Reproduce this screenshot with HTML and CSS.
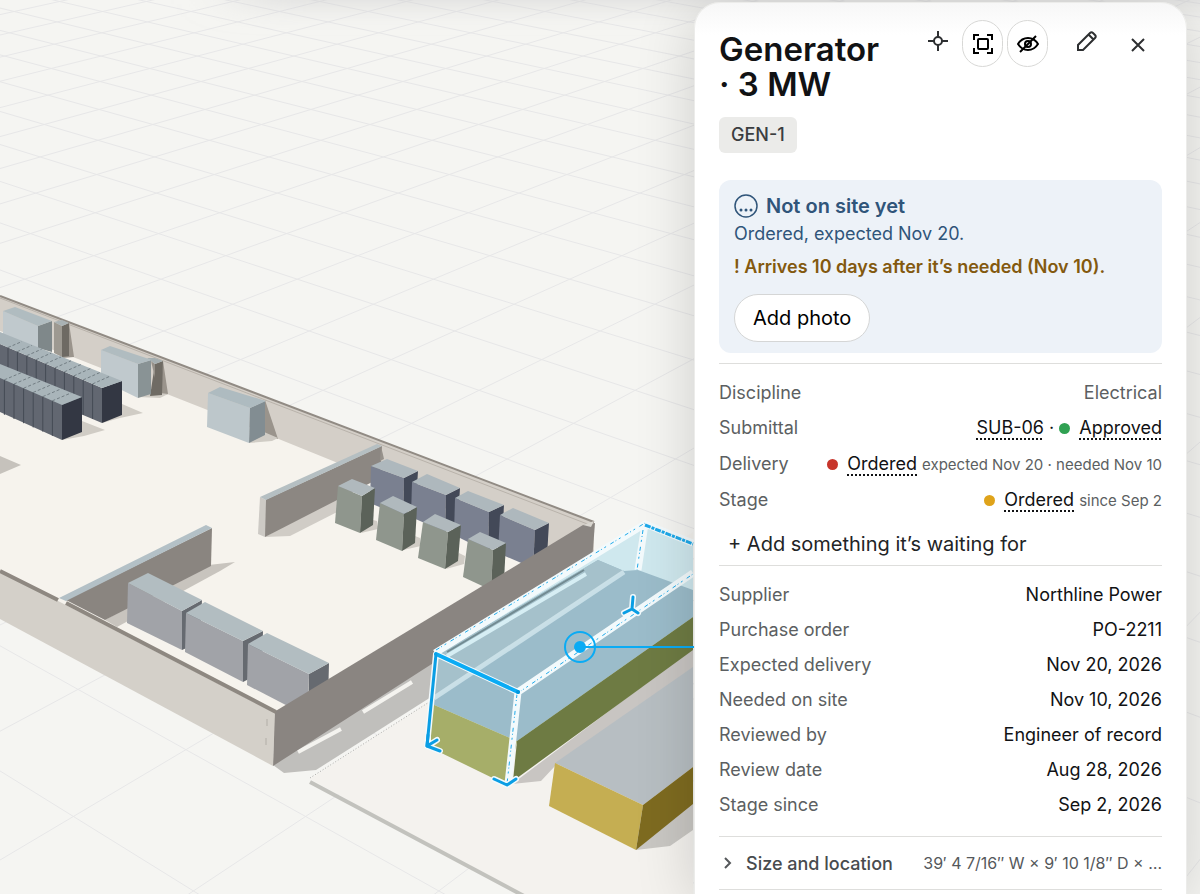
FILE: index.html
```html
<!DOCTYPE html>
<html lang="en">
<head>
<meta charset="utf-8">
<meta name="viewport" content="width=device-width, initial-scale=1">
<title>Generator · 3 MW</title>
<link rel="stylesheet" href="styles.css">
</head>
<body>
<div class="app">
  <svg class="scene" viewBox="0 0 1200 894" preserveAspectRatio="xMinYMin slice" aria-hidden="true">
    <defs>
      <filter id="soft" x="-20%" y="-200%" width="140%" height="500%"><feGaussianBlur stdDeviation="30 14"/></filter>
    </defs>
    <rect width="1200" height="894" fill="#f5f5f2"/>
    <g id="grid" class="grid"></g>
    <rect x="240" y="-30" width="1060" height="34" fill="#c9c9cc" fill-opacity=".6" filter="url(#soft)"/>

    <!-- building floor and back wall -->
    <path fill="#f6f3ed" d="M0 300 595 524 590 560 275 740 0 600z"/>
    <path fill="#d4cfc8" d="M0 296 594 522 594 560 540 548 333 461 205 409 73 357 0 331z"/>
    <path class="rim" d="M0 296 594 522"/>
    <path class="rim-light" d="M0 298 590 525"/>

    <!-- wall units -->
    <path fill="#9a948c" d="M69 323 74 357 62 358zM163 361 168 394 160 396zM265 400 278 439 263 435z"/>
    <path fill="#d0ccc5" d="M249 443 272 441 278 438 264 432zM138 397 160 398 168 394 152 392z"/>
    <g><path fill="#c0c9cd" d="M3 311 38 326V350L3 334z"/><path fill="#7f888a" d="M38 326 52 321V352L38 348z"/><path fill="#b0bcc0" d="M3 311 15 307 52 321 38 326z"/></g>
    <g><path fill="#9d9991" d="M54 322 62 326V357L54 353z"/><path fill="#6e6a63" d="M62 326 69 323V356L62 357z"/><path fill="#a9b2b4" d="M54 322 62 320 69 323 62 326z"/></g>
    <g><path fill="#6f6b64" d="M155 364 163 361 162 395 150 396z"/><path fill="#96918a" d="M151 361 155 364 155 378z"/><path fill="#a4aeb0" d="M147 358 155 358 163 361 155 364z"/><path fill="#c0c9cd" d="M101 350 138 364V398L101 380z"/><path fill="#899395" d="M138 364 151 360 151 394 138 398z"/><path fill="#b0bcc0" d="M101 350 110 346 152 360 138 364z"/></g>
    <g><path fill="#bdc7cb" d="M208 393 250 408 249 443 207 427z"/><path fill="#828d92" d="M250 408 265 401V435L249 443z"/><path fill="#aebbc0" d="M208 393 220 387 266 401 250 408z"/></g>

    <!-- server racks -->
    <path fill="#d0ccc5" d="M102 423 122 404 143 413 120 418zM62 440 82 421 105 430 84 436z"/>
    <path fill="#626771" d="M0 344 102 388V423L0 380z"/><path fill="#333743" d="M102 388 122 381V415L102 423z"/><path fill="#a9b5ba" d="M0 332 122 381 102 388 0 344z"/>
    <g id="seams-back" class="seams"></g>
    <path fill="#626771" d="M0 378 62 405V440L0 412z"/><path fill="#333743" d="M62 405 82 397V432L62 440z"/><path fill="#a9b5ba" d="M0 364 82 397 62 405 0 378z"/>
    <g id="seams-front" class="seams"></g>
    <path fill="#c6c2bc" d="M0 456 21 465 0 474z"/>

    <!-- back partition -->
    <path fill="#d0ccc6" d="M265 537 290 536 345 508V490z"/>
    <path fill="#8c8782" d="M265 500 382 446 380 478 265 537z"/>
    <path fill="#cdcac5" d="M260 497 266 500 265 537 258 534z"/>
    <path fill="#b5bfc2" d="M260 497 377 444 382 446 266 500z"/>
    <path fill="#97928b" d="M381 446 384 459 380 461z"/>

    <!-- electrical cabinets -->
    <g class="cab-blue">
      <path class="f" d="M371 466 404 478 403 517 370 503z"/><path class="s" d="M404 478 418 471 416 503 403 517z"/><path class="t" d="M371 466 387 459 418 471 404 478z"/>
      <path class="f" d="M412 482 446 495 445 532 411 517z"/><path class="s" d="M446 495 460 488 458 522 445 532z"/><path class="t" d="M412 482 427 474 460 488 446 495z"/>
      <path class="f" d="M455 498 489 512 488 552 454 535z"/><path class="s" d="M489 512 504 505 502 540 488 550z"/><path class="t" d="M455 498 468 491 504 505 489 512z"/>
      <path class="f" d="M500 515 535 530 533 568 498 553z"/><path class="s" d="M535 530 549 523 547 556 533 568z"/><path class="t" d="M500 515 513 508 549 523 535 530z"/>
    </g>
    <path fill="#d0ccc5" d="M361 533 378 529 377 521 373 520zM403 550 421 546 420 538 415 536zM446 569 464 564 465 556 459 553z"/>
    <g class="cab-green">
      <path class="f" d="M338 486 362 496 360 533 335 523z"/><path class="s" d="M362 496 375 488 373 525 360 533z"/><path class="t" d="M338 486 352 479 375 488 362 496z"/>
      <path class="f" d="M380 503 404 514 402 551 376 540z"/><path class="s" d="M404 514 417 507 415 543 402 551z"/><path class="t" d="M380 503 393 496 417 507 404 514z"/>
      <path class="f" d="M423 522 448 532 445 569 418 558z"/><path class="s" d="M448 532 461 525 458 561 445 569z"/><path class="t" d="M423 522 435 514 461 525 448 532z"/>
      <path class="f" d="M468 539 493 550 491 590 463 577z"/><path class="s" d="M493 550 506 543 504 580 491 590z"/><path class="t" d="M468 539 480 532 506 543 493 550z"/>
    </g>

    <!-- front partition and switchgear -->
    <path fill="#c8c4be" d="M105 620 200 566 235 562 220 571 117 627z"/>
    <path fill="#8a8580" d="M66 600 212 528 211 566 105 620z"/>
    <path fill="#b3c0c6" d="M59 598 206 525 212 528 66 601z"/>
    <g class="gear">
      <path class="f" d="M128 583 182 611V650L127 623z"/><path class="s" d="M182 611 202 600 200 642 182 650z"/><path class="t" d="M128 583 148 573 202 600 182 611z"/>
      <path class="f" d="M186 613 243 641V682L185 652z"/><path class="s" d="M243 641 263 631 262 672 243 682z"/><path class="t" d="M186 613 205 602 263 631 243 641z"/>
      <path class="f" d="M248 644 309 674 307 716 247 685z"/><path class="s" d="M309 674 329 663 328 700 308 715z"/><path class="t" d="M248 644 267 633 329 663 309 674z"/>
    </g>

    <!-- outer walls, ground shadow and pad -->
    <path fill="#c0bfbc" d="M273 765 284 773 316 770 450 685 600 580 590 550z"/>
    <path class="slit" d="M298 752 341 729M363 712 412 682"/>
    <path fill="#f4f2ee" d="M310 779 693 532V894H520z"/>
    <path class="pad-dash" d="M310 778 434 699"/>
    <path class="pad-edge" d="M310 782 524 896"/>
    <path fill="#8a8581" d="M274 712 583 525 595 523 592 561 273 766z"/>
    <path fill="#d4d0c9" d="M0 571 275 713 273 766 0 619z"/>
    <path class="front-rim" d="M0 571 58 600M66 603 276 712"/>
    <path fill="#d9d6d0" d="M583 525 594 521 591 527z"/>
    <path class="tick" d="M267 719V726M266 738V745"/>

    <!-- second generator -->
    <path fill="#c9c7c3" d="M636 850 670 846 693 830V800z"/>
    <path fill="#c8c5c2" d="M512 784 541 781 555 766 693 670V648z"/>
    <path fill="#b7bec2" d="M555 763 693 667V767L643 805z"/>
    <path fill="#c5ae52" d="M555 763 643 805 636 850 549 806z"/>
    <path fill="#7e6b20" d="M643 805 693 767V804L636 850z"/>

    <!-- selected generator -->
    <path fill="#cfe8ee" d="M435 653 645 524 693 543V617L517 741 432 704z"/>
    <path fill="#9bbcca" d="M437 655 598 560 624 571 638 570 693 590V617L517 741 432 704z"/>
    <path fill="#a5c1cb" d="M437 655 598 560 624 571 434 699z"/>
    <path fill="#a6ae69" d="M432 704 517 741 507 785 427 746z"/>
    <path fill="#6e7b43" d="M517 741 693 617V650L513 781z"/>
    <path class="streak-wide" d="M434 698 624 572"/>
    <path class="streak" d="M447 656 586 574"/>
    <path class="streak-dark" d="M447 652 584 570"/>
    <path class="halo" d="M435 653 645 524 693 543M518 692 693 573M645 524 638 570M518 692 508 784"/>
    <path class="spark" d="M436 650 645 523M518 693 693 574M643 530 637 570M517 694 507 784"/>
    <path class="spark strong" d="M645 525 693 544"/>
    <path class="outline-halo" d="M518 692 436 654 427 746 440 751M428 735V746L437 740M494 779 507 785 516 779M633 597 632 609 624 613M632 609 638 613"/>
    <path class="outline" d="M518 692 436 654"/>
    <path class="outline dark" d="M436 654 427 746"/>
    <path class="outline dark" d="M440 751 427 746 428 735M427 746 437 740M494 779 507 785 516 779M633 597 632 609 624 613M632 609 638 613"/>
    <circle cx="518" cy="692" r="2" fill="#0096dc"/>

    <!-- callout marker -->
    <g class="marker"><circle cx="580" cy="647" r="15"/><path d="M580 647H700"/><circle class="dot" cx="580" cy="647" r="5"/></g>
  </svg>

  <aside class="panel" aria-label="Item details">
    <header class="header">
      <h1 class="title">Generator · 3 MW</h1>
      <div class="actions">
        <button class="icon-btn locate" type="button" aria-label="Center in view"><svg width="22" height="22" viewBox="0 0 22 22"><circle cx="11" cy="11" r="4"/><path d="M11 1V7M11 15V21M1 11H7M15 11H21"/></svg></button>
        <button class="icon-btn ring" type="button" aria-label="Isolate"><svg width="22" height="22" viewBox="0 0 22 22"><path d="M2 7V2H7M15 2H20V7M20 15V20H15M7 20H2V15"/><rect x="6" y="6" width="10" height="10" rx="1"/></svg></button>
        <button class="icon-btn ring" type="button" aria-label="Hide"><svg width="22" height="22" viewBox="0 0 22 22"><path d="M1 11C6 3 16 3 21 11C16 19 6 19 1 11Z"/><circle cx="11" cy="11" r="3"/><path d="M3 19 19 3"/></svg></button>
        <button class="icon-btn edit" type="button" aria-label="Edit"><svg width="22" height="22" viewBox="0 0 22 22"><path d="M2 20V15L14 3Q15.500 1.500 17 3L19 5Q20.500 6.500 19 8L7 20ZM12.500 4.500 17.500 9.500"/></svg></button>
        <button class="icon-btn close" type="button" aria-label="Close"><svg width="14" height="14" viewBox="0 0 14 14"><path d="M1 1 13 13M13 1 1 13"/></svg></button>
      </div>
    </header>
    <span class="tag">GEN-1</span>

    <section class="status">
      <h2 class="status-title"><svg width="24" height="24" viewBox="0 0 24 24" aria-hidden="true"><circle cx="12" cy="12" r="11"/><path d="M7 16H7.010M12 16H12.010M17 16H17.010"/></svg>Not on site yet</h2>
      <p class="status-text">Ordered, expected Nov 20.</p>
      <p class="status-warning">! Arrives 10 days after it’s needed (Nov 10).</p>
      <button class="photo-btn" type="button">Add photo</button>
    </section>

    <section class="group">
      <dl class="rows">
        <div class="row"><dt>Discipline</dt><dd class="muted">Electrical</dd></div>
        <div class="row linked"><dt>Submittal</dt><dd><a href="#submittal">SUB-06</a> · <i class="dot green"></i><a href="#review">Approved</a></dd></div>
        <div class="row linked"><dt>Delivery</dt><dd><i class="dot red"></i><a href="#delivery">Ordered</a> <small>expected Nov 20 · needed Nov 10</small></dd></div>
        <div class="row linked"><dt>Stage</dt><dd><i class="dot amber"></i><a href="#stage">Ordered</a> <small>since Sep 2</small></dd></div>
      </dl>
      <button class="add-btn" type="button">+ Add something it’s waiting for</button>
    </section>

    <section class="group facts">
      <dl class="rows">
        <div class="row"><dt>Supplier</dt><dd>Northline Power</dd></div>
        <div class="row"><dt>Purchase order</dt><dd>PO-2211</dd></div>
        <div class="row"><dt>Expected delivery</dt><dd>Nov 20, 2026</dd></div>
        <div class="row"><dt>Needed on site</dt><dd>Nov 10, 2026</dd></div>
        <div class="row"><dt>Reviewed by</dt><dd>Engineer of record</dd></div>
        <div class="row"><dt>Review date</dt><dd>Aug 28, 2026</dd></div>
        <div class="row"><dt>Stage since</dt><dd>Sep 2, 2026</dd></div>
      </dl>
    </section>

    <button class="disclosure" type="button" aria-expanded="false">
      <svg width="8" height="12" viewBox="0 0 8 12" aria-hidden="true"><path d="M1 1 6 6 1 11"/></svg>
      <span class="disclosure-name">Size and location</span>
      <span class="disclosure-value">39′ 4 7/16″ W × 9′ 10 1/8″ D × …</span>
    </button>
  </aside>
</div>
<script src="scene.js"></script>
</body>
</html>
```
FILE: styles.css
```css
* { box-sizing: border-box; }
body { margin: 0; font-family: Inter, "Liberation Sans", sans-serif; font-size: 18px; color: #111214; background: #f5f5f2; }
h1, h2, p, dl, dd { margin: 0; }
button { font: inherit; color: inherit; background: none; border: 0; padding: 0; cursor: pointer; }
a { color: inherit; }

.app { position: relative; display: flex; justify-content: flex-end; height: 100vh; padding: 2px 13px 0 0; overflow: hidden; }

/* 3D view behind the panel */
.scene { position: absolute; inset: 0; width: 100%; height: 100%; }
.scene path { stroke-linejoin: round; }
.grid line { stroke: #e7e7e8; stroke-width: 1; }
.rim { stroke: #918b84; stroke-width: 2; fill: none; }
.rim-light { stroke: #b9b3ab; stroke-width: 1; fill: none; }
.front-rim { stroke: #8e8881; stroke-width: 4; fill: none; }
.seams line { stroke: #454a54; stroke-width: 1; }
.seams .top { stroke: #737e84; stroke-dasharray: 3 2; }
.cab-blue .f { fill: #7a8090; } .cab-blue .s { fill: #434958; } .cab-blue .t { fill: #aeb8bd; }
.cab-green .f { fill: #8f968d; } .cab-green .s { fill: #5b6259; } .cab-green .t { fill: #b0b9bd; }
.gear .f { fill: #a1a3a8; } .gear .s { fill: #666a70; } .gear .t { fill: #b2bdc1; }
.slit { stroke: #f4f3ef; stroke-width: 4; fill: none; }
.pad-dash { stroke: #aaa9a6; stroke-dasharray: 1 2; fill: none; }
.pad-edge { stroke: #c2c2bd; stroke-width: 4; fill: none; }
.tick { stroke: #b2aea7; fill: none; }
.streak-wide { stroke: #d3e7ed; stroke-opacity: .8; stroke-width: 5; fill: none; }
.streak { stroke: #d6eef4; stroke-width: 4; fill: none; }
.streak-dark { stroke: #728b92; stroke-width: 2; fill: none; }
.halo { stroke: #f3fafc; stroke-width: 7; fill: none; }
.spark { stroke: #1da9ea; stroke-width: 1; stroke-dasharray: 4 2 1 3 2 5; fill: none; }
.spark.strong { stroke-width: 3; stroke-dasharray: 6 1 3 1; }
.outline-halo { stroke: #f3fafc; stroke-width: 6; stroke-linecap: round; fill: none; }
.outline { stroke: #0aabf4; stroke-width: 4; stroke-linecap: round; fill: none; }
.outline.dark { stroke: #0a9ee4; stroke-width: 3; }
.marker { stroke: #0aabf4; stroke-width: 2; fill: none; }
.marker .dot { fill: #0aabf4; }

/* details panel */
.panel { position: relative; flex: none; width: 493px; max-width: 100%; height: 100%; padding: 17px 24px 0; border: 1px solid #ececea; border-bottom: 0; border-radius: 26px 26px 0 0; background: linear-gradient(#f7f7f7, #fff 32px); box-shadow: 0 8px 60px rgba(0, 0, 0, .16); overflow: hidden; }
.header { display: flex; justify-content: space-between; align-items: flex-start; gap: 24px; }
.title { flex: 1; padding-top: 12px; font-size: 33px; line-height: 35px; font-weight: 600; }
.actions { flex: none; display: flex; align-items: flex-start; gap: 4px; }
.icon-btn { display: flex; align-items: center; justify-content: center; height: 42px; color: #2d2f31; }
.icon-btn svg { fill: none; stroke: currentColor; stroke-width: 2; }
.locate { width: 40px; }
.ring { width: 41px; height: 47px; border: 1px solid #d8d8d6; border-radius: 24px; background: #fff; color: #000; }
.edit { width: 46px; margin-left: 12px; }
.close { width: 48px; height: 50px; }
.tag { display: inline-block; margin-top: 15px; padding: 0 12px; border-radius: 6px; background: #ebebe9; color: #3a3d40; font-weight: 500; line-height: 36px; }

.status { margin-top: 27px; padding: 12px 15px 11px; border-radius: 12px; background: #edf2f8; color: #30557a; }
.status-title { display: flex; align-items: center; gap: 8px; font-size: 20px; line-height: 28px; font-weight: 600; }
.status-title svg { fill: none; stroke: currentColor; stroke-width: 3; stroke-linecap: round; }
.status-title circle { stroke-width: 1.500; }
.status-text { line-height: 27px; }
.status-warning { margin-top: 6px; line-height: 27px; font-weight: 600; color: #83590f; }
.photo-btn { display: block; height: 48px; margin-top: 14px; padding: 0 18px; border: 1px solid #d5d6d6; border-radius: 24px; background: #fff; color: #000; font-size: 20px; }

.group { margin-top: 10px; padding-top: 11px; border-top: 1px solid #dededc; }
.row { display: flex; justify-content: space-between; align-items: baseline; line-height: 35px; }
.row.linked { line-height: 36px; }
dt, .muted, small { color: #5c5f62; }
dd { text-align: right; white-space: nowrap; }
dd a { text-decoration: underline dotted 2px; text-underline-offset: 4px; text-decoration-skip-ink: none; }
small { font-size: 15px; line-height: 1; }
.dot { display: inline-block; width: 11px; height: 11px; margin-right: 9px; border-radius: 50%; }
.green { background: #30a152; }
.red { background: #c7352b; }
.amber { background: #dfa31a; }
.add-btn { display: block; height: 42px; margin-top: 5px; padding-left: 9px; font-size: 20px; color: #222426; }
.facts { margin-top: 0; padding-bottom: 14px; }

.disclosure { display: flex; align-items: center; width: 100%; height: 54px; padding-left: 5px; border-top: 1px solid #dededc; border-bottom: 1px solid #dededc; color: #55585b; text-align: left; }
.disclosure svg { flex: none; fill: none; stroke: currentColor; stroke-width: 2; margin-right: 14px; }
.disclosure-name { flex: none; font-weight: 500; color: #484b4e; }
.disclosure-value { flex: 1; font-size: 16px; text-align: right; white-space: nowrap; }
```
FILE: scene.js
```js
const NS = "http://www.w3.org/2000/svg";

function addLine(parent, x1, y1, x2, y2, name) {
  const line = document.createElementNS(NS, "line");
  line.setAttribute("x1", x1.toFixed(1));
  line.setAttribute("y1", y1.toFixed(1));
  line.setAttribute("x2", x2.toFixed(1));
  line.setAttribute("y2", y2.toFixed(1));
  if (name) line.setAttribute("class", name);
  parent.appendChild(line);
}

// Ground grid seen in perspective, with its horizon above the view.
const HORIZON = -484;
function project(row, col) {
  const w = 1 / (0.0013519 + 0.00004164 * row);
  return [120.6 + w * (0.1785 * col - 0.0363), HORIZON + w];
}
const grid = document.getElementById("grid");
for (let c = -24; c <= 30; c++) {
  for (const side of [-0.5, 0.5]) {
    const a = project(-17, c - 17 * side);
    const b = project(19, c + 19 * side);
    addLine(grid, ...a, ...b);
  }
}

// Joints between neighbouring rack cabinets.
const back = document.getElementById("seams-back");
for (let i = 1; i <= 10; i++) {
  const x = 102 - i * 9.4;
  const y = 388 - i * 4.05;
  addLine(back, x, y, x, y + 35);
  addLine(back, x, y, x + 18 - i * 0.4, y - 8 + i * 0.2, "top");
}
const front = document.getElementById("seams-front");
for (let i = 1; i <= 6; i++) {
  const x = 62 - i * 9.6;
  const y = 405 - i * 4.2;
  addLine(front, x, y, x, y + 35);
  addLine(front, x, y, x + 19, y - 8, "top");
}
```
